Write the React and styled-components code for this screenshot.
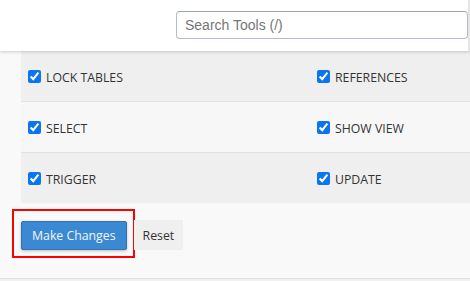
import styled, { createGlobalStyle } from "styled-components"

const GlobalStyle = createGlobalStyle`
  html, body {
    margin: 0;
    padding: 0;
    background: #f9f9f9;
    font-family: "Open Sans", "Liberation Sans", sans-serif;
    overflow: hidden;
  }
`

const Page = styled.div`
  width: 470px;
  height: 281px;
  overflow: hidden;
  display: flex;
  flex-direction: column;
`

const Header = styled.header`
  height: 51px;
  flex-shrink: 0;
  background: #fff;
  box-shadow: 0 1px 3px rgba(0, 0, 0, 0.18);
  border-right: 2px solid #e4e4e4;
  display: flex;
  align-items: center;
  padding-left: 176px;
  box-sizing: border-box;
  position: relative;
  z-index: 1;
`

const Search = styled.input`
  width: 292px;
  height: 28px;
  margin-top: -1px;
  box-sizing: border-box;
  border: 1px solid #b4bccb;
  border-top-color: #9aa3b4;
  border-radius: 4px;
  padding: 0 8px;
  font-family: "Liberation Sans", Arial, sans-serif;
  font-size: 14px;
  color: #333;
  outline: none;
  &::placeholder {
    color: #767676;
  }
`

const Content = styled.main`
  flex: 1;
  padding-left: 21px;
  display: flex;
  flex-direction: column;
`

const Table = styled.div`
  display: grid;
  grid-template-columns: 289px 289px;
  width: 578px;
`

const Row = styled.div`
  display: contents;
`

const Cell = styled.label`
  height: ${(p) => (p.$last ? "50px" : "51px")};
  box-sizing: border-box;
  padding-left: 7px;
  padding-top: 2px;
  display: flex;
  align-items: center;
  gap: 5px;
  background: ${(p) => (p.$odd ? "#f7f7f7" : "#efefef")};
  border-bottom: ${(p) => (p.$last ? "none" : "1px solid #e2e2e2")};
  font-size: 12.3px;
  color: #333;
  text-transform: uppercase;
`

const Check = styled.input`
  margin: 0 0 1px;
  width: 13px;
  height: 13px;
  accent-color: #0a75f0;
`

const Actions = styled.div`
  display: flex;
  align-items: flex-start;
  margin-top: 6px;
  margin-left: -9px;
`

const Highlight = styled.div`
  border: 2px solid #f00;
  padding: 10px 6px 6px 7px;
`

const PrimaryButton = styled.button`
  height: 29px;
  padding: 0 10px;
  border: 1px solid #2f72b5;
  border-radius: 2px;
  background: #3b89d3;
  color: #f2f6fb;
  font-family: "Open Sans", sans-serif;
  font-size: 12.3px;
  box-shadow: 0 1px 3px rgba(0, 0, 0, 0.25);
  cursor: pointer;
`

const SecondaryButton = styled.button`
  height: 30px;
  margin-top: 11px;
  margin-left: -1px;
  padding: 0 9px;
  border: none;
  background: #efefef;
  color: #333;
  font-family: "Open Sans", sans-serif;
  font-size: 12.3px;
  cursor: pointer;
`

const BottomLine = styled.div`
  margin-top: auto;
  margin-left: -21px;
  height: 2px;
  border-top: 1px solid #e2e2e2;
  background: #f1f1f1;
`

const rows = [
  ["Lock Tables", "References"],
  ["Select", "Show View"],
  ["Trigger", "Update"],
]

export default function App() {
  return (
    <Page>
      <GlobalStyle />
      <Header>
        <Search placeholder="Search Tools (/)" />
      </Header>
      <Content>
        <Table>
          {rows.map((pair, i) => (
            <Row key={i}>
              {pair.map((name) => (
                <Cell key={name} $odd={i % 2 === 1} $last={i === rows.length - 1}>
                  <Check type="checkbox" defaultChecked />
                  {name}
                </Cell>
              ))}
            </Row>
          ))}
        </Table>
        <Actions>
          <Highlight>
            <PrimaryButton>Make Changes</PrimaryButton>
          </Highlight>
          <SecondaryButton>Reset</SecondaryButton>
        </Actions>
        <BottomLine />
      </Content>
    </Page>
  )
}
